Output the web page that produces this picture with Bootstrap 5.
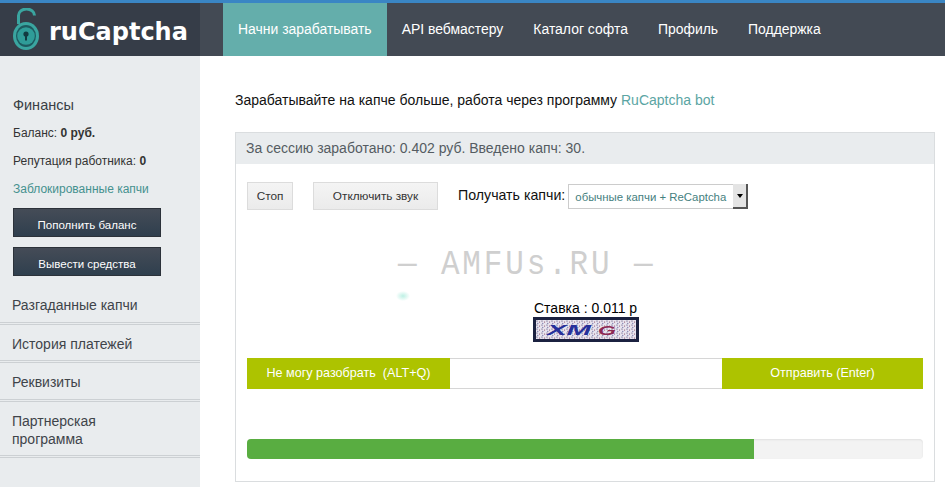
<!DOCTYPE html>
<html lang="ru">
<head>
<meta charset="UTF-8">
<title>ruCaptcha</title>
<link rel="stylesheet" href="https://cdn.jsdelivr.net/npm/bootstrap@5.3.0/dist/css/bootstrap.min.css">
<style>
  html, body { height: 487px; overflow: hidden; }
  body { font-family: "Liberation Sans", Arial, sans-serif; font-size: 14px; color: #222; background: #fff; }
  .topbar { height: 56px; background: #434a54; border-top: 3px solid #3a86c4; }
  .brand { width: 200px; background: #363d48; gap: 8px; padding-left: 13px; }
  .brand-name { font-family: "DejaVu Sans", sans-serif; font-weight: 700; font-size: 24px; line-height: 1; color: #fff; padding-top: 4px; }
  .menu-item { color: #fff; font-size: 13.95px; padding: 0 15px; line-height: 53px; text-decoration: none; }
  .menu-item.current { background: #64aeab; margin-left: 23px; }
  .page-body { height: 431px; }
  .side { width: 200px; background: #e9ecee; flex: none; padding-top: 39px; }
  .side-fin { padding: 0 13px; }
  .side-title { font-size: 14.5px; color: #3a3f45; margin-bottom: 10px; line-height: 20px; }
  .side-line { font-size: 12px; line-height: 16px; margin-bottom: 12px; color: #333; }
  .side-line-last { margin-bottom: 11px; }
  .side-link { color: #45918f; text-decoration: none; }
  .dark-btn { display: block; width: 148px; height: 29px; line-height: 33px; text-align: center; font-size: 11.5px; color: #fff; border: 1px solid #2c323a; background: linear-gradient(#454c57, #2f3f4e); text-decoration: none; margin-bottom: 10px; }
  .side-nav { border-bottom: 3px double #ccd0d3; padding: 10px 12px 7.5px; font-size: 14px; line-height: 18px; color: #3f444a; text-decoration: none; display: block; }
  .main-col { padding: 35px 10px 0 35px; }
  .promo { font-size: 14px; line-height: 18px; color: #111; margin-bottom: 23px; }
  .promo a { color: #5ba5a3; text-decoration: none; }
  .work-box { border: 1px solid #dadddf; height: 350px; }
  .work-head { background: #e9ecee; height: 31px; line-height: 31px; padding-left: 10px; font-size: 14px; color: #555c62; }
  .work-inner { padding: 18px 11px 0; }
  .grey-btn { background: linear-gradient(#f4f4f4, #ebebeb); border: 1px solid #dcdcdc; height: 28px; line-height: 27px; font-size: 11.8px; color: #333; text-align: center; padding: 0; }
  .btn-stop { width: 46px; }
  .btn-sound { width: 125px; margin-left: 20px; }
  .get-label { font-size: 14.2px; color: #111; margin: 0 3px 0 20px; }
  .mode-select { width: 165px; height: 25px; border: 1px solid #ccc; border-right: 0; background: #fff; font-size: 11.4px; color: #45807e; padding-left: 6px; line-height: 24px; white-space: nowrap; }
  .mode-arrow { width: 15px; height: 25px; background: #e4e4e4; border-right: 2px solid #555; border-bottom: 2px solid #555; }
  .mode-arrow::after { content: ""; border: 3.5px solid transparent; border-top: 4px solid #000; margin-top: 4px; }
  .watermark-wrap { position: relative; height: 73px; padding: 37px 0 0 151px; }
  .watermark-line { display: block; font-family: "Liberation Mono", monospace; font-size: 31px; color: #cfcfcf; letter-spacing: 2.85px; line-height: 36px; white-space: pre; transform: scaleY(1.15); transform-origin: 0 50%; }
  .cyan-spot { position: absolute; left: 149px; top: 81px; width: 14px; height: 10px; background: radial-gradient(closest-side, #bdf0e4, #fff); }
  .bid { font-size: 14px; color: #000; line-height: 16px; margin: 17px 0 1px 287px; }
  .captcha-img { display: block; width: 106px; height: 25px; margin-left: 286px; border: 3px solid #1b2140; }
  .answer-row { height: 31px; margin-top: 16px; }
  .lime-btn { background: #adc300; color: #fff; font-size: 12.6px; text-align: center; line-height: 31px; border: 0; padding: 0; }
  .btn-skip { width: 203px; }
  .btn-send { width: 201px; }
  .answer-input { flex: 1; min-width: 0; border: 1px solid #d6d6d6; border-left: 0; border-right: 0; background: #fff; }
  .timer { height: 20px; margin-top: 50px; background: #f3f3f3; border-radius: 4px; box-shadow: inset 0 1px 2px rgba(0,0,0,.08); }
  .timer .progress-bar { background: #59ad41; }
</style>
</head>
<body>
  <div class="topbar d-flex">
    <a class="brand d-flex align-items-center text-decoration-none" href="#">
      <svg width="28" height="44" viewBox="13 8 28 44">
        <path d="M18.5 24V15.5a8 6.5 0 0 1 16 0" fill="none" stroke="#3aa5a0" stroke-width="3"/>
        <ellipse cx="26" cy="36" rx="13" ry="14" fill="#3aa5a0"/>
        <ellipse cx="26" cy="36" rx="10" ry="11" fill="#1d5a5f"/>
        <circle cx="26" cy="36" r="8.8" fill="#2f9c98"/>
        <circle cx="26" cy="34" r="2.6" fill="#123a40"/>
        <rect x="25" y="34" width="2" height="6.5" fill="#123a40"/>
      </svg>
      <span class="brand-name">ruCaptcha</span>
    </a>
    <nav class="d-flex">
      <a class="menu-item current" href="#">Начни зарабатывать</a>
      <a class="menu-item" href="#">API вебмастеру</a>
      <a class="menu-item" href="#">Каталог софта</a>
      <a class="menu-item" href="#">Профиль</a>
      <a class="menu-item" href="#">Поддержка</a>
    </nav>
  </div>
  <div class="page-body d-flex">
    <aside class="side">
      <div class="side-fin">
        <div class="side-title">Финансы</div>
        <div class="side-line">Баланс: <b>0 руб.</b></div>
        <div class="side-line">Репутация работника: <b>0</b></div>
        <div class="side-line side-line-last"><a class="side-link" href="#">Заблокированные капчи</a></div>
        <a class="dark-btn" href="#">Пополнить баланс</a>
        <a class="dark-btn" href="#">Вывести средства</a>
      </div>
      <a class="side-nav" href="#">Разгаданные капчи</a>
      <a class="side-nav" href="#">История платежей</a>
      <a class="side-nav" href="#">Реквизиты</a>
      <a class="side-nav" href="#">Партнерская<br>программа</a>
    </aside>
    <main class="main-col flex-grow-1">
      <div class="promo">Зарабатывайте на капче больше, работа через программу <a href="#">RuCaptcha bot</a></div>
      <div class="work-box">
        <div class="work-head">За сессию заработано: 0.402 руб. Введено капч: 30.</div>
        <div class="work-inner">
          <div class="d-flex align-items-center">
            <button class="grey-btn btn-stop">Стоп</button>
            <button class="grey-btn btn-sound">Отключить звук</button>
            <span class="get-label">Получать капчи:</span>
            <div class="mode-select">обычные капчи + ReCaptcha</div>
            <div class="mode-arrow d-flex align-items-center justify-content-center"></div>
          </div>
          <div class="watermark-wrap">
            <span class="watermark-line">— AMFUs.RU —</span>
            <div class="cyan-spot"></div>
          </div>
          <div class="bid">Ставка : 0.011 р</div>
          <svg class="captcha-img" viewBox="0 0 100 19">
            <defs>
              <pattern id="noise" width="5" height="4" patternUnits="userSpaceOnUse">
                <rect width="5" height="4" fill="#e8e4ee"/>
                <circle cx="1" cy="1" r=".6" fill="#3f3468"/>
                <circle cx="3.6" cy="2" r=".55" fill="#7a2f50"/>
                <circle cx="1.8" cy="3.3" r=".5" fill="#2f2f80"/>
              </pattern>
            </defs>
            <rect width="100" height="19" fill="url(#noise)"/>
            <text x="11" y="15" font-family="Liberation Sans" font-weight="700" font-style="italic" font-size="14" fill="#26309a" textLength="44" lengthAdjust="spacingAndGlyphs">XM</text>
            <text x="62" y="15" font-family="Liberation Sans" font-weight="700" font-style="italic" font-size="13" fill="#8e2a55" textLength="18" lengthAdjust="spacingAndGlyphs">G</text>
          </svg>
          <div class="answer-row d-flex">
            <button class="lime-btn btn-skip">Не могу разобрать&nbsp; (ALT+Q)</button>
            <input class="answer-input" type="text" aria-label="Ответ">
            <button class="lime-btn btn-send">Отправить (Enter)</button>
          </div>
          <div class="progress timer">
            <div class="progress-bar" style="width:75%"></div>
          </div>
        </div>
      </div>
    </main>
  </div>
  <script src="https://cdn.jsdelivr.net/npm/bootstrap@5.3.0/dist/js/bootstrap.bundle.min.js"></script>
</body>
</html>
